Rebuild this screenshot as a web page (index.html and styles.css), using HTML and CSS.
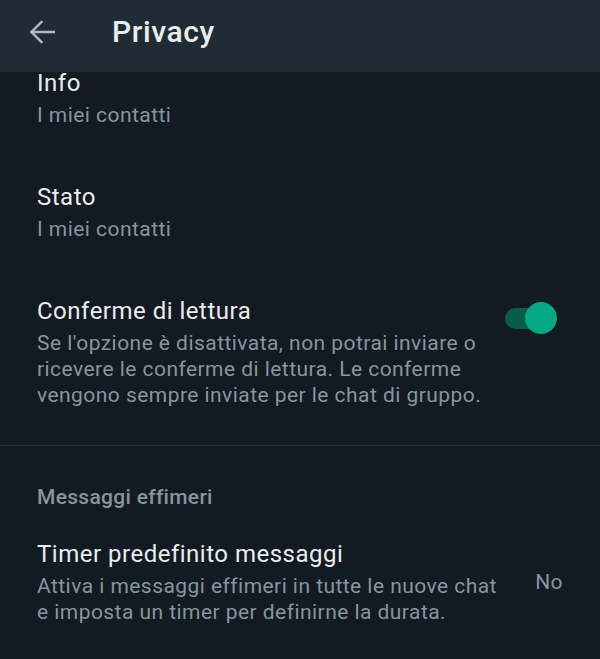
FILE: index.html
```html
<!DOCTYPE html>
<html lang="it">

    <head>
        <meta charset="UTF-8">
        <meta name="viewport" content="width=device-width, initial-scale=1.0">
        <title>Privacy</title>
        <link rel="stylesheet" href="styles.css">
    </head>

    <body>
        <div class="screen">
            <header class="toolbar">
                <button class="back-btn" aria-label="Indietro">
                    <svg width="26" height="24" viewBox="0 0 26 24">
                        <path d="M25 12H2.5M12.5 2 2.5 12l10 10" fill="none" stroke="currentColor" stroke-width="2.4" stroke-linecap="square" />
                    </svg>
                </button>
                <h1 class="toolbar-title">Privacy</h1>
            </header>

            <main class="list">
                <div class="item">
                    <div class="item-text">
                        <p class="item-title">Info</p>
                        <p class="item-sub">I miei contatti</p>
                    </div>
                </div>

                <div class="item">
                    <div class="item-text">
                        <p class="item-title">Stato</p>
                        <p class="item-sub">I miei contatti</p>
                    </div>
                </div>

                <div class="item">
                    <div class="item-text">
                        <p class="item-title">Conferme di lettura</p>
                        <p class="item-sub">Se l'opzione è disattivata, non potrai inviare o ricevere le conferme di lettura. Le conferme vengono sempre inviate per le chat di gruppo.</p>
                    </div>
                    <div class="switch on">
                        <span class="switch-track"></span>
                        <span class="switch-thumb"></span>
                    </div>
                </div>

                <hr class="divider">

                <h2 class="section-title">Messaggi effimeri</h2>

                <div class="item centered">
                    <div class="item-text">
                        <p class="item-title">Timer predefinito messaggi</p>
                        <p class="item-sub">Attiva i messaggi effimeri in tutte le nuove chat e imposta un timer per definirne la durata.</p>
                    </div>
                    <span class="item-value">No</span>
                </div>
            </main>
        </div>
    </body>

</html>
```

FILE: styles.css
```css
* {
    margin: 0;
    padding: 0;
    box-sizing: border-box;
    font-family: Roboto, "Noto Sans", Arial, sans-serif;
}

body {
    background-color: #111b21;
    height: 100vh;
    overflow: hidden;
}

.screen {
    display: flex;
    flex-direction: column;
    width: 100%;
}

.toolbar {
    position: relative;
    z-index: 1;
    display: flex;
    align-items: flex-start;
    height: 72px;
    padding: 14px 0 0 24px;
    background-color: #1f2c34;
}

.back-btn {
    display: flex;
    align-items: center;
    justify-content: center;
    width: 36px;
    height: 36px;
    margin-right: 52px;
    background: none;
    border: none;
    color: #aebac1;
    cursor: pointer;
}

.toolbar-title {
    font-size: 30px;
    line-height: 36px;
    font-weight: 500;
    letter-spacing: 0.6px;
    color: #e9edef;
}

/* list is scrolled a little under the toolbar */
.list {
    display: flex;
    flex-direction: column;
    margin-top: -4px;
}

.item {
    display: flex;
    align-items: flex-start;
    gap: 19px;
    padding: 27px 37px 27px 37px;
}

.item:first-child {
    padding-top: 0;
}

.item.centered {
    align-items: center;
}

.item-text {
    flex: 1;
}

.item-title {
    font-size: 24px;
    line-height: 30px;
    letter-spacing: 0.5px;
    color: #e9edef;
}

.item-sub {
    margin-top: 4px;
    font-size: 21px;
    line-height: 26px;
    letter-spacing: 0.45px;
    color: #8696a0;
}

.item-value {
    padding-left: 16px;
    font-size: 21px;
    line-height: 26px;
    letter-spacing: 0.45px;
    color: #8696a0;
}

.switch {
    position: relative;
    flex-shrink: 0;
    width: 52px;
    height: 32px;
    margin-top: 6px;
    margin-right: 6px;
}

.switch-track {
    position: absolute;
    left: 0;
    top: 5.5px;
    width: 45px;
    height: 21px;
    border-radius: 11px;
    background-color: #0a5c4a;
}

.switch-thumb {
    position: absolute;
    right: 0;
    top: 0;
    width: 32px;
    height: 32px;
    border-radius: 50%;
    background-color: #00a884;
}

.divider {
    height: 1px;
    margin-top: 10px;
    border: none;
    background-color: #222d34;
}

.section-title {
    padding: 38px 37px 2px;
    font-size: 21px;
    line-height: 26px;
    font-weight: 500;
    letter-spacing: 0.3px;
    color: #8696a0;
}
```
